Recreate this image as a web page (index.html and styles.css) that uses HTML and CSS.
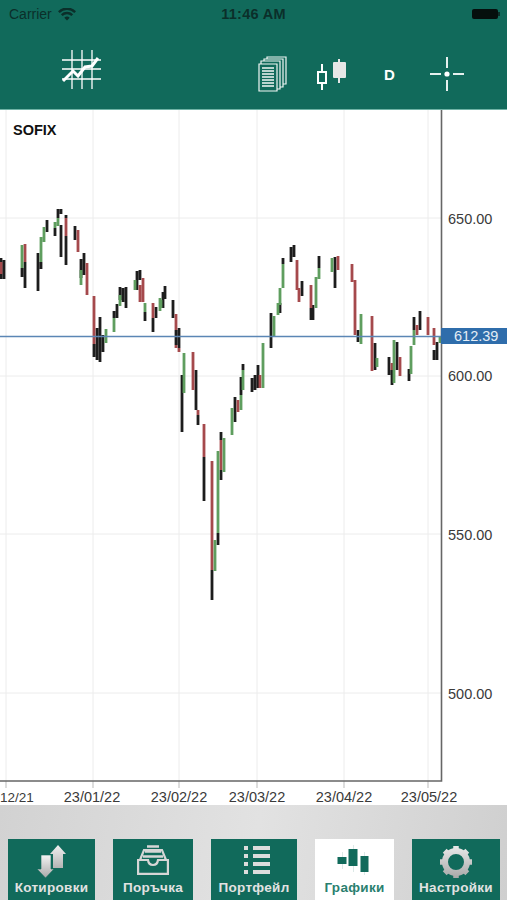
FILE: index.html
```html
<!DOCTYPE html>
<html lang="en">

<head>
    <meta charset="UTF-8">
    <meta name="viewport" content="width=device-width, initial-scale=1.0">
    <title>SOFIX</title>
    <link rel="stylesheet" href="styles.css">
</head>

<body>
    <!-- Status bar and toolbar -->
    <header class="top-bar">
        <div class="status-bar">
            <div class="carrier">
                <span>Carrier</span>
                <svg class="wifi" viewBox="0 0 18 13"><path d="M9 12.6 6.3 9.7a3.9 3.9 0 0 1 5.4 0zM4.6 8 2.9 6.2a8.7 8.7 0 0 1 12.2 0L13.4 8a6.3 6.3 0 0 0-8.8 0zM1.7 5 0 3.2a12.8 12.8 0 0 1 18 0L16.3 5A10.4 10.4 0 0 0 1.7 5z"/></svg>
            </div>
            <div class="clock">11:46 AM</div>
            <div class="battery"><span class="battery-cap"></span></div>
        </div>
        <div class="tools">
            <svg class="tool-chart" viewBox="0 0 40 40">
                <path d="M10 0V39M20 0V39M30 0V39M0 10H39M0 19H39M0 29H39" fill="none" stroke="#fff" stroke-width="1.3"/>
                <path d="M1 31 11 21 16 26 23 17 30 16 36 8" fill="none" stroke="#fff" stroke-width="3"/>
            </svg>
            <div class="tools-right">
                <svg class="tool-pages" viewBox="0 0 29 36" fill="#116a5b" stroke="#f2f7f6" stroke-width="1.2">
                    <path d="M9 1H28V28H9z"/>
                    <path d="M6 3H25V31H6z"/>
                    <path d="M3 5H22V33H3z"/>
                    <path d="M1 8H19V35H1z"/>
                    <path d="M4 12H16M4 15H16M4 18H16M4 21H16M4 24H16M4 27H16M4 30H16" stroke-width="1.3"/>
                </svg>
                <svg class="tool-candles" viewBox="0 0 32 32">
                    <path d="M6 5V12M6 25V31" stroke="#fff" stroke-width="2"/>
                    <rect x="2" y="13" width="8" height="11" fill="none" stroke="#fff" stroke-width="2"/>
                    <path d="M23 0V24" stroke="#e6e6e6" stroke-width="2"/>
                    <rect x="17" y="3" width="13" height="16" rx="1" fill="#e6e6e6"/>
                </svg>
                <span class="tool-period">D</span>
                <svg class="tool-cross" viewBox="0 0 34 34">
                    <path d="M0 17H11M23 17H34M17 0V11M17 23V34" stroke="#e6f0ee" stroke-width="2"/>
                    <circle cx="17" cy="17" r="2.6" fill="#fff"/>
                </svg>
            </div>
        </div>
    </header>

    <!-- Chart -->
    <main class="chart">
        <svg class="chart-svg" viewBox="0 110 507 695">
            <path class="grid" d="M6 110V781M93 110V781M179 110V781M257 110V781M344 110V781M428 110V781M0 218H441M0 376H441M0 534H441M0 693H441"/>
            <path class="tick" d="M6 781V788M93 781V788M179 781V788M257 781V788M344 781V788M428 781V788"/>

            <path class="bars-black" d="M1 258V279M4 260V279M22 268V277M25 262V288M38 253V291M41 262V269M47 220V232M55 228V236M58 209V218M61 209V214M61 225V257M66 215V218M66 236V265M75 226V240M81 259V278M84 253V275M94 344V357M97 328V360M100 317V362M103 335V352M114 311V318M117 304V318M120 287V300M123 288V302M126 287V308M137 271V290M140 270V280M145 312V321M153 318V332M156 307V318M163 292V308M165 286V299M173 300V318M176 330V345M179 328V348M182 375V432M196 370V410M198 415V425M204 457V501M212 570V600M218 533V545M221 432V440M221 470V480M235 397V422M241 377V395M243 364V370M252 378V392M255 375V390M258 365V388M271 313V348M280 303V313M283 258V264M291 247V262M294 245V257M302 281V296M311 308V320M313 305V320M319 256V268M335 257V288M358 330V342M375 343V370M389 357V375M392 370V385M397 342V370M409 369V381M414 317V330M420 311V330M434 350V360M437 342V360"/>
            <path class="bars-red" d="M1 262V274M25 244V262M66 218V236M78 230V252M87 263V295M94 296V344M140 285V302M143 278V302M153 303V318M176 314V330M176 345V348M179 348V352M193 352V390M198 410V415M204 424V457M212 461V570M221 440V470M238 400V412M260 375V388M297 260V290M299 288V302M311 285V308M338 256V270M352 264V282M355 280V335M372 316V371M392 363V370M400 357V376M417 325V335M428 317V335M434 328V345"/>
            <path class="bars-green" d="M22 245V268M41 237V262M44 227V242M58 218V226M55 222V228M81 270V285M106 329V343M114 318V332M120 295V306M135 280V290M145 303V312M160 298V311M161 300V308M184 353V393M215 540V571M218 451V533M224 438V472M232 408V435M241 395V410M243 370V390M263 343V388M274 316V337M278 303V315M280 288V305M283 264V288M316 277V308M319 268V279M332 258V272M361 314V344M377 358V367M394 340V383M411 346V374M414 330V345M440 337V343"/>

            <path class="last-line" d="M0 336.5H441"/>
            <path class="axis" d="M0 781H441.5V110"/>

            <text class="label symbol" x="13" y="135">SOFIX</text>
            <text class="label" x="448" y="224">650.00</text>
            <text class="label" x="448" y="381">600.00</text>
            <text class="label" x="448" y="540">550.00</text>
            <text class="label" x="448" y="699">500.00</text>
            <text class="label date-first" x="0" y="802">12/21</text>
            <text class="label date" x="92" y="802">23/01/22</text>
            <text class="label date" x="179" y="802">23/02/22</text>
            <text class="label date" x="257" y="802">23/03/22</text>
            <text class="label date" x="344" y="802">23/04/22</text>
            <text class="label date" x="429" y="802">23/05/22</text>
        </svg>
        <div class="last-price">612.39</div>
    </main>

    <!-- Bottom tabs -->
    <nav class="tab-bar">
        <a href="#quotes" class="tab">
            <svg class="tab-icon" width="30" height="34" viewBox="0 0 30 34">
                <defs>
                    <linearGradient id="arrowUp" x1="0" y1="0" x2="0" y2="1">
                        <stop offset="0" stop-color="#f0f0f0"/>
                        <stop offset="1" stop-color="#b4b4b4"/>
                    </linearGradient>
                    <linearGradient id="arrowDown" x1="0" y1="0" x2="0" y2="1">
                        <stop offset="0" stop-color="#f4f4f4"/>
                        <stop offset="1" stop-color="#a8a8a8"/>
                    </linearGradient>
                </defs>
                <path d="M21 0 29 9H26V23H16V9H13z" fill="url(#arrowUp)"/>
                <path d="M4 10H14V24H17L8.500 33 0 24H4z" fill="url(#arrowDown)" stroke="#116a5b" stroke-width=".6"/>
            </svg>
            <span>Котировки</span>
        </a>
        <a href="#order" class="tab">
            <svg class="tab-icon" width="32" height="30" viewBox="0 0 32 30" fill="none" stroke="#d6d6d6" stroke-width="2.2">
                <path d="M3 15 7 5H25L29 15"/>
                <path d="M1.100 15H11C11.500 19 13 20 16 20S20.500 19 21 15H30.900V28.900H1.100z"/>
                <path d="M10 1.500H22M8 6.500H24M6 11.500H26" stroke-width="2.600"/>
            </svg>
            <span>Поръчка</span>
        </a>
        <a href="#portfolio" class="tab">
            <svg class="tab-icon" width="31" height="30" viewBox="0 0 31 30" fill="#dcdcdc">
                <rect x="5" y="1" width="4" height="4"/><rect x="14" y="1" width="17" height="4"/>
                <rect x="5" y="9" width="4" height="4"/><rect x="14" y="9" width="17" height="4"/>
                <rect x="5" y="17" width="4" height="4"/><rect x="14" y="17" width="17" height="4"/>
                <rect x="5" y="25" width="4" height="4"/><rect x="14" y="25" width="17" height="4"/>
            </svg>
            <span>Портфейл</span>
        </a>
        <a href="#charts" class="tab tab-active">
            <svg class="tab-icon" width="36" height="30" viewBox="0 0 36 30" fill="#116a5b">
                <rect x="5" y="7" width="1" height="17" opacity=".15"/>
                <rect x="16" y="0" width="1" height="27" opacity=".15"/>
                <rect x="27" y="7" width="1" height="23" opacity=".15"/>
                <rect x=".5" y="12" width="9" height="7"/>
                <rect x="11.500" y="4" width="9" height="17"/>
                <rect x="23.500" y="11" width="8" height="16"/>
            </svg>
            <span>Графики</span>
        </a>
        <a href="#settings" class="tab">
            <svg class="tab-icon" width="34" height="34" viewBox="0 0 34 34">
                <defs>
                    <linearGradient id="gearFill" gradientUnits="userSpaceOnUse" x1="0" y1="0" x2="0" y2="34">
                        <stop offset="0" stop-color="#ececec"/>
                        <stop offset="1" stop-color="#a6a6a6"/>
                    </linearGradient>
                </defs>
                <circle cx="17" cy="17" r="11" fill="none" stroke="url(#gearFill)" stroke-width="6"/>
                <path d="M17 1V6M17 28V33M1 17H6M28 17H33M5.700 5.700 9.200 9.200M24.800 24.800 28.300 28.300M28.300 5.700 24.800 9.200M9.200 24.800 5.700 28.300" stroke="url(#gearFill)" stroke-width="5.500"/>
            </svg>
            <span>Настройки</span>
        </a>
    </nav>
</body>

</html>
```

FILE: styles.css
```css
:root {
    --primary-color: #116a5b;
    --grid-color: #ececec;
    --axis-color: #666;
    --last-color: #2f6dab;
}

* {
    margin: 0;
    padding: 0;
    box-sizing: border-box;
}

html,
body {
    height: 100%;
}

body {
    display: flex;
    flex-direction: column;
    font-family: 'Liberation Sans', Arial, sans-serif;
    background-color: white;
    overflow: hidden;
}

/* Top bar */
.top-bar {
    height: 110px;
    flex-shrink: 0;
    background-color: var(--primary-color);
    border-bottom: 1px solid #6fb3a5;
}

.status-bar {
    height: 28px;
    padding: 0 9px;
    display: grid;
    grid-template-columns: 1fr auto 1fr;
    align-items: center;
    color: #0b2f2a;
    font-size: 14px;
}

.carrier {
    display: flex;
    align-items: center;
    gap: 6px;
}

.wifi {
    width: 18px;
    height: 13px;
    fill: #0b2f2a;
}

.clock {
    font-size: 14.5px;
    font-weight: bold;
    letter-spacing: 0.3px;
}

.battery {
    justify-self: end;
    width: 26px;
    height: 10px;
    border-radius: 2px;
    background-color: #050f0d;
    position: relative;
}

.battery-cap {
    position: absolute;
    right: -2px;
    top: 3px;
    width: 2px;
    height: 4px;
    background-color: #0b2f2a;
}

.tools {
    display: flex;
    align-items: center;
    justify-content: space-between;
    padding: 11px 43px 0 62px;
    height: 81px;
}

.tools-right {
    display: flex;
    align-items: center;
}

.tool-chart {
    width: 40px;
    height: 40px;
    margin-bottom: 8px;
}

.tool-pages {
    width: 29px;
    height: 36px;
}

.tool-candles {
    width: 32px;
    height: 32px;
    margin-left: 29px;
    margin-top: 1px;
}

.tool-period {
    color: white;
    font-size: 15px;
    font-weight: bold;
    margin-left: 36px;
    width: 11px;
}

.tool-cross {
    width: 34px;
    height: 34px;
    margin-left: 35px;
}

/* Chart */
.chart {
    flex: 1;
    position: relative;
    min-height: 0;
}

.chart-svg {
    display: block;
    width: 100%;
    height: 100%;
}

.grid {
    stroke: var(--grid-color);
    stroke-width: 1;
    fill: none;
}

.tick {
    stroke: #bbb;
    stroke-width: 1;
    fill: none;
}

.axis {
    stroke: var(--axis-color);
    stroke-width: 1.6;
    fill: none;
}

.bars-black,
.bars-red,
.bars-green {
    stroke-width: 2.8;
    fill: none;
}

.bars-black {
    stroke: #1d1d1d;
}

.bars-red {
    stroke: #a5494c;
}

.bars-green {
    stroke: #5f9e5f;
}

.last-line {
    stroke: #5b86b5;
    stroke-width: 1.4;
    fill: none;
}

.label {
    font-size: 14.5px;
    fill: #3a3a3a;
}

.symbol {
    font-size: 14.5px;
    font-weight: bold;
    fill: #111;
}

.date {
    text-anchor: middle;
}

.date-first {
    font-size: 13.5px;
}

.last-price {
    position: absolute;
    left: 441px;
    right: 0;
    top: 218px;
    height: 16px;
    padding-left: 13px;
    background-color: var(--last-color);
    color: #e4edf6;
    font-size: 14.5px;
    line-height: 16px;
}

/* Bottom tabs */
.tab-bar {
    height: 95px;
    flex-shrink: 0;
    padding: 34px 0 0 8px;
    display: grid;
    grid-template-columns: 87px 80px 86px 79px 88px;
    gap: 18px;
    background: linear-gradient(100deg, #d2d2d2, #e2e2e2 50%, #cfcfcf);
}

.tab {
    display: flex;
    flex-direction: column;
    align-items: center;
    justify-content: space-between;
    padding: 6px 0 5px;
    background-color: var(--primary-color);
    color: #e2e2e2;
    font-size: 13.5px;
    font-weight: bold;
    letter-spacing: 0.3px;
    text-decoration: none;
}

.tab-active {
    background-color: white;
    color: #2a7f6f;
}
```
